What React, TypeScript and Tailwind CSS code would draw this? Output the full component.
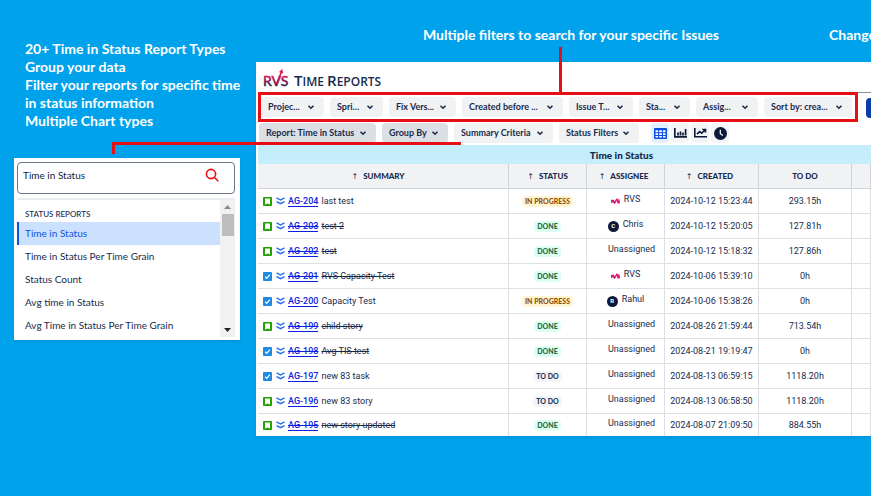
import type { ReactNode } from 'react';
import { clsx } from 'clsx';

type IssueType = 'story' | 'task';
type Status = 'IN PROGRESS' | 'DONE' | 'TO DO';

interface Issue {
  id: string;
  type: IssueType;
  summary: string;
  status: Status;
  assignee: string;
  created: string;
  todo: string;
  closed?: boolean;
}

const issues: Issue[] = [
  { id: 'AG-204', type: 'story', summary: 'last test', status: 'IN PROGRESS', assignee: 'RVS', created: '2024-10-12 15:23:44', todo: '293.15h' },
  { id: 'AG-203', type: 'story', summary: 'test 2', status: 'DONE', assignee: 'Chris', created: '2024-10-12 15:20:05', todo: '127.81h', closed: true },
  { id: 'AG-202', type: 'story', summary: 'test', status: 'DONE', assignee: 'Unassigned', created: '2024-10-12 15:18:32', todo: '127.86h', closed: true },
  { id: 'AG-201', type: 'task', summary: 'RVS Capacity Test', status: 'DONE', assignee: 'RVS', created: '2024-10-06 15:39:10', todo: '0h', closed: true },
  { id: 'AG-200', type: 'task', summary: 'Capacity Test', status: 'IN PROGRESS', assignee: 'Rahul', created: '2024-10-06 15:38:26', todo: '0h' },
  { id: 'AG-199', type: 'story', summary: 'child story', status: 'DONE', assignee: 'Unassigned', created: '2024-08-26 21:59:44', todo: '713.54h', closed: true },
  { id: 'AG-198', type: 'task', summary: 'Avg TIS test', status: 'DONE', assignee: 'Unassigned', created: '2024-08-21 19:19:47', todo: '0h', closed: true },
  { id: 'AG-197', type: 'task', summary: 'new 83 task', status: 'TO DO', assignee: 'Unassigned', created: '2024-08-13 06:59:15', todo: '1118.20h' },
  { id: 'AG-196', type: 'story', summary: 'new 83 story', status: 'TO DO', assignee: 'Unassigned', created: '2024-08-13 06:58:50', todo: '1118.20h' },
  { id: 'AG-195', type: 'story', summary: 'new story updated', status: 'DONE', assignee: 'Unassigned', created: '2024-08-07 21:09:50', todo: '884.55h', closed: true },
];

const filters = [
  { label: 'Projec...', width: 'w-[63px]' },
  { label: 'Spri...', width: 'w-[53px]' },
  { label: 'Fix Vers...', width: 'w-[67px]' },
  { label: 'Created before ...', width: 'w-[101px]' },
  { label: 'Issue T...', width: 'w-[64px]' },
  { label: 'Sta...', width: 'w-[51px]' },
  { label: 'Assig...', width: 'w-[62px]' },
  { label: 'Sort by: crea...', width: 'w-[88px]' },
];

const reportTypes = [
  'Time in Status',
  'Time in Status Per Time Grain',
  'Status Count',
  'Avg time in Status',
  'Avg Time in Status Per Time Grain',
];

const statusStyles: Record<Status, string> = {
  'IN PROGRESS': 'bg-[#fff5d2] text-[#974f0c]',
  DONE: 'bg-[#dcfff1] text-[#1c6b4a]',
  'TO DO': 'bg-[#f4f5f7] text-[#253858]',
};

function ChevronDown() {
  return (
    <svg viewBox="0 0 8 8" className="size-2 shrink-0" fill="none" stroke="currentColor" strokeWidth="1.6" aria-hidden="true">
      <path d="M1.5 2.7 4 5.2l2.5-2.5" />
    </svg>
  );
}

function FilterButton({ label, width, active }: { label: string; width: string; active?: boolean }) {
  return (
    <button
      type="button"
      className={clsx(
        'flex h-5 shrink-0 items-center justify-between rounded-sm pr-[9px] pl-[7px] text-[9px] font-bold whitespace-nowrap text-[#172b4d]',
        width,
        active ? 'bg-[#dcdfe4]' : 'bg-[#f1f2f4]',
      )}
    >
      {label}
      <ChevronDown />
    </button>
  );
}

function ViewButton({ label, active, children }: { label: string; active?: boolean; children: ReactNode }) {
  return (
    <button
      type="button"
      aria-label={label}
      className={clsx(
        'flex h-5 w-[18px] items-center justify-center rounded-sm',
        active ? 'bg-[#e4efff] text-[#0c4fe0]' : 'bg-[#f4f5f7] text-[#0b1a38]',
      )}
    >
      {children}
    </button>
  );
}

function RvsLogo() {
  return (
    <svg viewBox="0 0 27 20" className="h-5 w-[27px]" role="img" aria-label="RVS">
      <defs>
        <linearGradient id="rvs" x1="0" y1="0" x2="0" y2="1">
          <stop offset="0.2" stopColor="#e0124a" />
          <stop offset="0.85" stopColor="#2b1a4a" />
        </linearGradient>
      </defs>
      <text x="0" y="17" fontSize="14" fontFamily="Lato, sans-serif" fill="url(#rvs)" stroke="url(#rvs)" strokeWidth="0.5">
        RVS
      </text>
      <path d="M13.4 15.5 18.4 3" stroke="#d3124a" strokeWidth="1.6" />
      <path d="m19.2 0 .9 4.6-4-1.6Z" fill="#e0124a" />
    </svg>
  );
}

function TypeIcon({ type }: { type: IssueType }) {
  if (type === 'story') {
    return (
      <svg viewBox="0 0 9 9" className="size-[9px] shrink-0" role="img" aria-label="Story">
        <rect width="9" height="9" rx="1" fill="#22a006" />
        <path d="M2 1.6h5v6L4.5 6.4 2 7.6Z" fill="#fff" />
      </svg>
    );
  }
  return (
    <svg viewBox="0 0 9 9" className="size-[9px] shrink-0" role="img" aria-label="Task">
      <rect width="9" height="9" rx="1" fill="#1d8ae6" />
      <path d="m2.2 4.7 1.6 1.6 3-3.6" fill="none" stroke="#fff" strokeWidth="1.3" />
    </svg>
  );
}

function LowestIcon() {
  return (
    <svg viewBox="0 0 9 8" className="h-2 w-[9px] shrink-0" fill="none" stroke="#1d6bf0" strokeWidth="1.4" strokeLinecap="round" role="img" aria-label="Lowest priority">
      <path d="M1 1.2 4.5 3 8 1.2M1 4.8l3.5 1.8L8 4.8" />
    </svg>
  );
}

function Assignee({ name }: { name: string }) {
  if (name === 'Unassigned') {
    return <div className="pb-1 pl-3">{name}</div>;
  }
  return (
    <div className="flex items-center justify-center gap-1 pb-1">
      {name === 'RVS' ? (
        <svg viewBox="0 0 9 8" className="h-2 w-[9px]" fill="none" strokeWidth="1.4" aria-hidden="true">
          <path d="M.8 7V4.4h1.6v1.2L3.4 7l1.2-2.4" stroke="#c2187a" />
          <path d="M4 6.8 6 2.6M6.2 6.8h2V5.2H6.6V4h1.8" stroke="#e0246a" />
        </svg>
      ) : (
        <span className="mt-[2px] flex size-[11px] items-center justify-center rounded-full bg-[#0b1a38] text-[6px] leading-none font-bold text-white">
          {name === 'Chris' ? 'C' : 'R'}
        </span>
      )}
      <span>{name}</span>
    </div>
  );
}

function ReportPicker() {
  return (
    <section className="mr-4 ml-[14px] bg-white pt-1 pr-[5px] pb-[3px] pl-[3px] shadow-sm">
      <div className="flex h-8 items-center rounded-sm border border-[#6b778c] pr-[15px] pb-[6px] pl-[5px]">
        <input
          type="text"
          aria-label="Search reports"
          defaultValue="Time in Status"
          className="min-w-0 flex-1 text-[10px] text-[#091e42] outline-none"
        />
        <svg viewBox="0 0 14 14" className="size-[14px]" fill="none" stroke="#ee1010" strokeWidth="1.6" strokeLinecap="round" aria-hidden="true">
          <circle cx="6" cy="6" r="4.6" />
          <path d="m9.5 9.5 3.3 3.3" />
        </svg>
      </div>
      <div className="mt-1 flex border-t-2 border-[#ebecf0]">
        <div className="min-w-0 flex-1">
          <h2 className="pt-[9px] pb-[3px] pl-2 text-[8px] leading-[10px] font-medium text-[#172b4d]">STATUS REPORTS</h2>
          <ul>
            {reportTypes.map((name, index) => (
              <li key={name}>
                <button
                  type="button"
                  className={clsx(
                    'block h-[23px] w-full border-l-2 pl-[6px] text-left text-[10px] whitespace-nowrap',
                    index === 0 ? 'border-[#0c55e0] bg-[#cce0ff] text-[#0c55e0]' : 'border-transparent text-[#172b4d]',
                  )}
                >
                  {name}
                </button>
              </li>
            ))}
          </ul>
        </div>
        <div className="flex w-[15px] flex-col items-center bg-[#f1f1f1] py-[5px]" aria-hidden="true">
          <svg viewBox="0 0 7 4" className="h-1 w-[7px]" fill="#8a8a8a"><path d="M0 4 3.5 0 7 4Z" /></svg>
          <div className="mt-[5px] h-[22px] w-3 bg-[#bdbdbd]" />
          <svg viewBox="0 0 7 4" className="mt-auto h-1 w-[7px]" fill="#222"><path d="M0 0 3.5 4 7 0Z" /></svg>
        </div>
      </div>
    </section>
  );
}

function HeaderCell({ children, sortable = true, className }: { children?: ReactNode; sortable?: boolean; className?: string }) {
  return (
    <th scope="col" className={clsx('h-[25px] border-r border-b border-[#cfd3da] py-0 pl-0 text-[8px] font-black', className)}>
      {sortable && <span className="mr-[5px] font-['DejaVu_Sans'] font-normal">↑</span>}
      {children}
    </th>
  );
}

function IssueTable() {
  return (
    <table className="w-full table-fixed border-separate border-spacing-0 text-center text-[#172b4d]">
      <caption className="h-[19px] bg-[#c6edfb] pl-[114px] text-[10px] leading-[21px] font-black text-[#172b4d]">Time in Status</caption>
      <thead className="bg-[#f1f2f4]">
        <tr>
          <HeaderCell className="pr-[10px]">SUMMARY</HeaderCell>
          <HeaderCell className="w-[78px] pr-0">STATUS</HeaderCell>
          <HeaderCell className="w-[78px] pr-1">ASSIGNEE</HeaderCell>
          <HeaderCell className="w-[94px] pr-1">CREATED</HeaderCell>
          <HeaderCell className="w-[93px] pr-0" sortable={false}>TO DO</HeaderCell>
          <HeaderCell className="w-[19px] pr-0" sortable={false} />
        </tr>
      </thead>
      <tbody className="font-[Roboto,sans-serif] text-[9px] [&_td]:h-[25px] [&_td]:border-r [&_td]:border-b [&_td]:border-[#dcdfe4] [&_td]:px-0 [&_td]:pt-[2px] [&_td]:pb-0 [&_tr:last-child_td]:h-[22px] [&_tr:last-child_td]:border-b-0">
        {issues.map((issue) => (
          <tr key={issue.id}>
            <td>
              <div className="flex items-center pl-[5px] whitespace-nowrap">
                <div className="flex items-center pb-[2px]">
                  <TypeIcon type={issue.type} />
                  <span className="mr-[3px] ml-1 flex"><LowestIcon /></span>
                  <a
                    href={`#${issue.id}`}
                    className={clsx('border-b border-[#0a1ee6] leading-[10px] font-medium text-[#0a1ee6]', issue.closed && 'line-through')}
                  >
                    {issue.id}
                  </a>
                </div>
                <span className={clsx('ml-[3px]', issue.closed && 'line-through')}>{issue.summary}</span>
              </div>
            </td>
            <td>
              <span className={clsx('inline-block rounded-sm px-[3px] font-[Lato,sans-serif] text-[7px] leading-[11px] font-black', statusStyles[issue.status])}>
                {issue.status}
              </span>
            </td>
            <td><Assignee name={issue.assignee} /></td>
            <td>{issue.created}</td>
            <td>{issue.todo}</td>
            <td />
          </tr>
        ))}
      </tbody>
    </table>
  );
}

export default function App() {
  return (
    <div className="relative flex min-h-screen overflow-hidden bg-[#00a2eb] font-[Lato,sans-serif]">
      <aside className="w-64 shrink-0 pt-10">
        <div className="mb-7 pl-[25px] text-[14px] leading-[18px] font-bold whitespace-nowrap text-white">
          <p>20+ Time in Status Report Types</p>
          <p>Group your data</p>
          <p>Filter your reports for specific time<br />in status information</p>
          <p>Multiple Chart types</p>
        </div>
        <ReportPicker />
      </aside>

      <main className="min-w-0 flex-1 pt-[26px]">
        <div className="flex gap-[110px] pb-[18px] pl-[167px] text-[14px] leading-[18px] font-bold whitespace-nowrap text-white">
          <p>Multiple filters to search for your specific Issues</p>
          <p>Change</p>
        </div>

        <div className="overflow-hidden bg-white pl-[2px] shadow-sm">
          <header className="flex h-[30px] items-center gap-1 pt-1 pl-[5px]">
            <RvsLogo />
            <h1 className="pt-1 font-['Open_Sans',sans-serif] text-[12px] leading-5 font-semibold whitespace-nowrap text-[#172b4d]">
              <span className="text-[15px] leading-5">T</span>IME <span className="text-[15px] leading-5">R</span>EPORTS
            </h1>
          </header>

          <div className="flex">
            <div className="flex shrink-0 gap-[6px] border-[3px] border-[#e60f14] py-[2px] pr-[3px]">
              {filters.map((filter) => (
                <FilterButton key={filter.label} {...filter} />
              ))}
            </div>
            <div className="flex flex-1 items-center border-t border-[#8590a2] pl-2">
              <button type="button" aria-label="Search" className="h-5 w-16 shrink-0 rounded-sm bg-[#0b3da8]" />
            </div>
          </div>

          <div className="flex gap-[6px] pt-[1px] pb-[2px] pl-[1px]">
            <FilterButton label="Report: Time in Status" width="w-[117px]" active />
            <FilterButton label="Group By" width="w-[66px]" active />
            <FilterButton label="Summary Criteria" width="w-[99px]" />
            <FilterButton label="Status Filters" width="w-[80px]" />
            <div className="flex gap-[2px] pl-[6px]">
              <ViewButton label="Table" active>
                <svg viewBox="0 0 13 11" className="h-[11px] w-[13px]" aria-hidden="true">
                  <rect width="13" height="11" rx="1" fill="currentColor" />
                  <path d="M1.5 2.2h2.6v2H1.5zM5.2 2.2h2.6v2H5.2zM8.9 2.2h2.6v2H8.9zM1.5 5.2h2.6v1.7H1.5zM5.2 5.2h2.6v1.7H5.2zM8.9 5.2h2.6v1.7H8.9zM1.5 7.9h2.6v1.7H1.5zM5.2 7.9h2.6v1.7H5.2zM8.9 7.9h2.6v1.7H8.9z" fill="#fff" />
                </svg>
              </ViewButton>
              <ViewButton label="Bar chart">
                <svg viewBox="0 0 13 10" className="h-[10px] w-[13px]" fill="none" stroke="currentColor" strokeWidth="1.7" aria-hidden="true">
                  <path d="M.8 0v8.8H13M4 7.5V4.5M6.5 7.5V3.5M9 7.5V4.5M11.6 7.5V1" />
                </svg>
              </ViewButton>
              <ViewButton label="Line chart">
                <svg viewBox="0 0 13 10" className="h-[10px] w-[13px]" fill="none" stroke="currentColor" strokeWidth="1.6" aria-hidden="true">
                  <path d="M.8 0v8.8H13M3 6.2l2.7-2.6 2 1.6L11 2M8.2 1.5h3.3v3" />
                </svg>
              </ViewButton>
              <ViewButton label="History">
                <svg viewBox="0 0 13 13" className="size-[13px]" aria-hidden="true">
                  <circle cx="6.5" cy="6.5" r="6.5" fill="currentColor" />
                  <path d="M6.3 2.8v4l2.6 1.7" fill="none" stroke="#fff" strokeWidth="1.2" />
                </svg>
              </ViewButton>
            </div>
          </div>

          <IssueTable />
        </div>
      </main>

      {/* callout lines from the captions to the controls */}
      <div className="absolute top-[47px] left-[559px] h-[46px] w-[3px] bg-[#e60f14]" />
      <div className="absolute top-[142px] left-[112px] h-3 w-[349px] border-t-[3px] border-l-[3px] border-[#e60f14]" />
    </div>
  );
}
